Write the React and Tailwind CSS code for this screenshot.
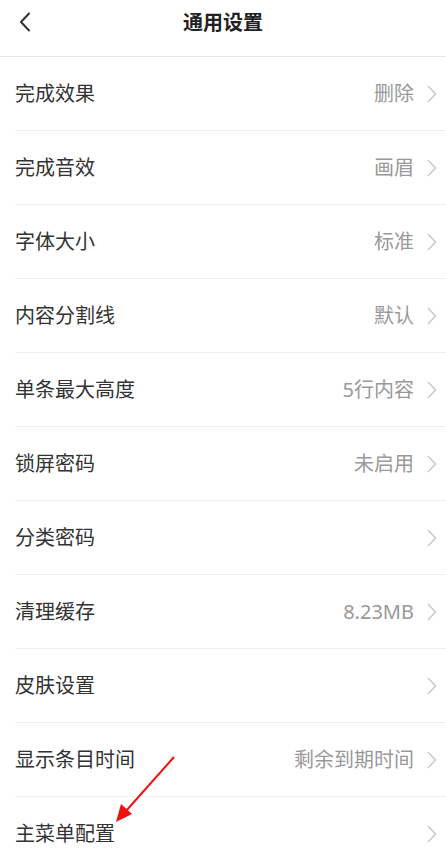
import React from "react";

const rows = [
  ["完成效果", "删除"],
  ["完成音效", "画眉"],
  ["字体大小", "标准"],
  ["内容分割线", "默认"],
  ["单条最大高度", "5行内容"],
  ["锁屏密码", "未启用"],
  ["分类密码", ""],
  ["清理缓存", "8.23MB"],
  ["皮肤设置", ""],
  ["显示条目时间", "剩余到期时间"],
  ["主菜单配置", ""],
];

function Chevron() {
  return (
    <svg width="10" height="18" viewBox="0 0 10 18" className="shrink-0">
      <path d="M1.5 1.5 L8.5 9 L1.5 16.5" fill="none" stroke="#c9c9c9" strokeWidth="1.5" strokeLinecap="round" strokeLinejoin="round" />
    </svg>
  );
}

export default function App() {
  return (
    <div
      className="relative w-[446px] h-[865px] overflow-hidden bg-white"
      style={{ fontFamily: '"Noto Sans", "Noto Sans CJK SC", sans-serif' }}
    >
      <div className="relative h-[57px] flex items-center justify-center border-b border-[#e8e8e8]">
        <svg width="12" height="20" viewBox="0 0 12 20" className="absolute left-[19px] top-[12px]">
          <path d="M10 1.5 L2 10 L10 18.5" fill="none" stroke="#333" strokeWidth="2" strokeLinecap="round" strokeLinejoin="round" />
        </svg>
        <span className="text-[20px] font-bold text-[#222] leading-none -mt-[10px]">通用设置</span>
      </div>
      <div className="flex flex-col">
        {rows.map(([label, value], i) => (
          <div key={i} className="pl-[15px]">
            <div className="h-[74px] flex items-center border-b border-[#efefef] pr-[9px]">
              <span className="flex-1 text-[20px] text-[#333] leading-none">{label}</span>
              {value && (
                <span className="text-[20px] text-[#999] leading-none mr-[13px]">{value}</span>
              )}
              <Chevron />
            </div>
          </div>
        ))}
      </div>
      <svg className="absolute left-0 top-0" width="446" height="865" viewBox="0 0 446 865">
        <line x1="174" y1="757" x2="126" y2="811" stroke="#ee1111" strokeWidth="2" />
        <polygon points="116,822 121,804 132,814" fill="#ee1111" />
      </svg>
    </div>
  );
}
